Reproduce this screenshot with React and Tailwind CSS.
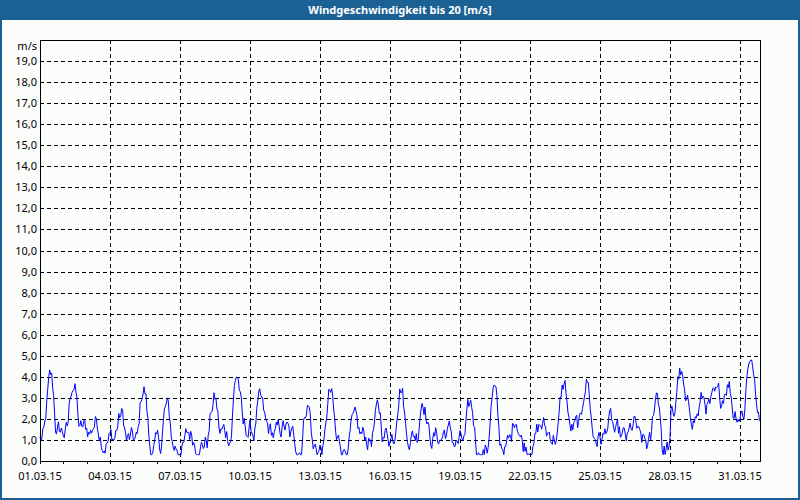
const X0 = 40, Y0 = 40, X1 = 760, Y1 = 461;
const yOf = (v) => Y1 - (v * (Y1 - Y0)) / 20;
const dayW = 70 / 3;

function makeData() {
  let s = 12345;
  const rnd = () => ((s = (s * 1103515245 + 12345) % 2147483648) / 2147483648);
  const pts = [];
  const n = 740;
  let noise = 0;
  for (let i = 0; i <= n; i++) {
    const day = i / 24;
    noise = noise * 0.8 + (rnd() - 0.5) * 0.9;
    const late = day > 27 ? 1.2 : 0;
    const cycle = Math.max(0, Math.sin(((i % 24) / 24) * Math.PI * 2 - 1.2)) * (1.6 + 1.2 * Math.sin(day * 1.7));
    let v = 1.0 + late + cycle + noise + Math.sin(day * 0.9) * 0.4;
    v = Math.min(4.8, Math.max(0.3, v));
    pts.push([X0 + (i / 24) * dayW, yOf(v)]);
  }
  return pts.map((p) => p[0].toFixed(1) + "," + p[1].toFixed(1)).join(" ");
}

export default function App() {
  const labels = ["01.03.15","04.03.15","07.03.15","10.03.15","13.03.15","16.03.15","19.03.15","22.03.15","25.03.15","28.03.15","31.03.15"];
  return (
    <div className="w-[800px] h-[500px] bg-[#1c6194] flex flex-col">
      <div className="h-[20px] flex items-center justify-center text-white font-bold text-[11px] [font-family:'DejaVu_Sans',sans-serif]">
        Windgeschwindigkeit bis 20 [m/s]
      </div>
      <div className="flex-1 mx-[2px] mb-[2px] bg-[#fbfdfb]">
        <svg width="796" height="478" viewBox="2 20 796 478" className="text-[11px] [font-family:'DejaVu_Sans',Verdana,sans-serif]">
          {Array.from({ length: 19 }, (_, k) => k + 1).map((v) => (
            <line key={v} x1={X0} x2={X1} y1={Math.round(yOf(v)) + 0.5} y2={Math.round(yOf(v)) + 0.5} stroke="#000" strokeDasharray="4 3" />
          ))}
          {labels.map((_, k) => k > 0 && (
            <line key={k} x1={X0 + k * 70 + 0.5} x2={X0 + k * 70 + 0.5} y1={Y0} y2={Y1} stroke="#000" strokeDasharray="4 3" />
          ))}
          {Array.from({ length: 31 }, (_, d) => (
            <line key={d} x1={Math.round(X0 + d * dayW) + 0.5} x2={Math.round(X0 + d * dayW) + 0.5} y1={Y1} y2={Y1 + 3} stroke="#000" />
          ))}
          <polyline points={makeData()} fill="none" stroke="#0000ff" strokeWidth="1" />
          <rect x={X0 + 0.5} y={Y0 + 0.5} width={X1 - X0} height={Y1 - Y0} fill="none" stroke="#000" />
          <text x={37} y={50} textAnchor="end">m/s</text>
          {Array.from({ length: 20 }, (_, v) => (
            <text key={v} x={37} y={yOf(v) + 4} textAnchor="end">{v.toFixed(1).replace(".", ",")}</text>
          ))}
          {labels.map((l, k) => (
            <text key={l} x={X0 + k * 70} y={480} textAnchor="middle">{l}</text>
          ))}
        </svg>
      </div>
    </div>
  );
}
